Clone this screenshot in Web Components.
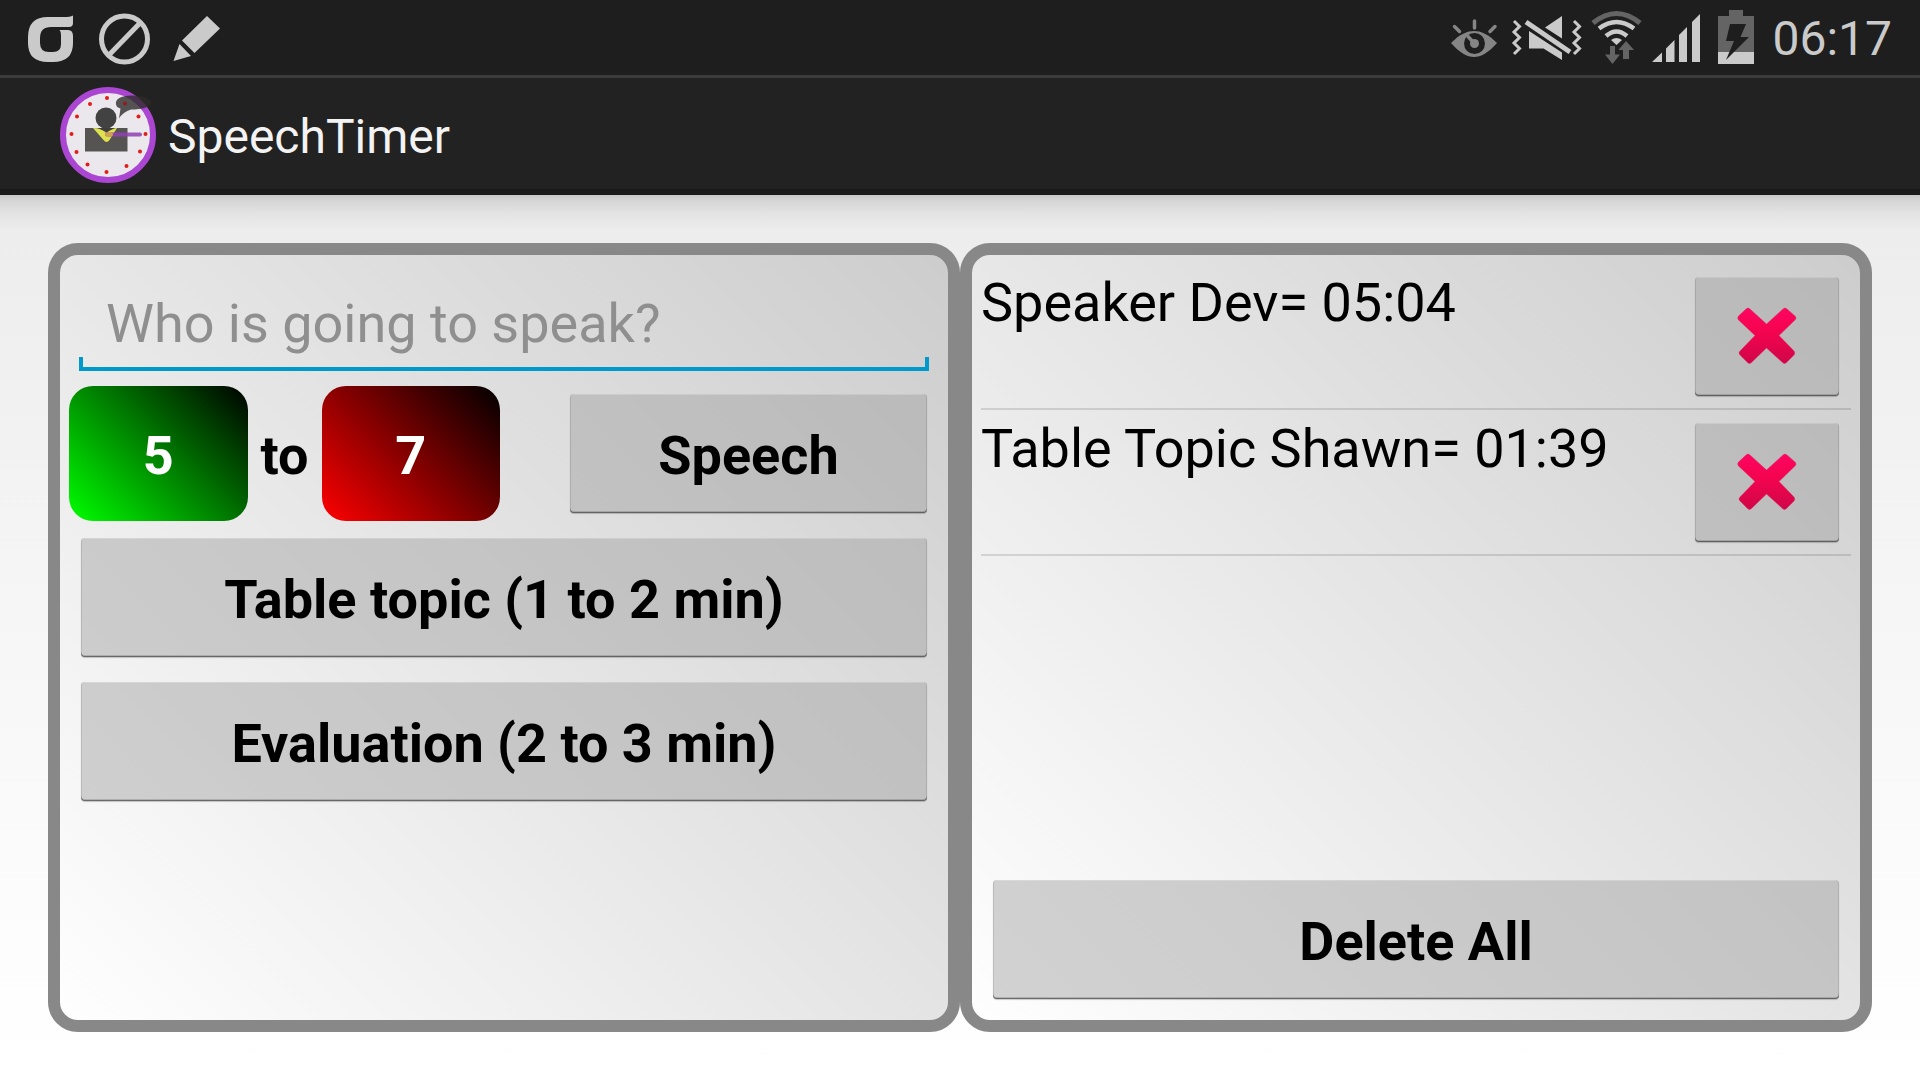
<!DOCTYPE html>
<html lang="en">
<head>
<meta charset="utf-8">
<meta name="viewport" content="width=device-width, initial-scale=1">
<title>SpeechTimer</title>
<style>
  html, body { margin: 0; }
  body { font-family: Roboto, "Liberation Sans", sans-serif; color: #000; background: #fff; }
</style>
</head>
<body>
<speech-app></speech-app>

<template id="t-app">
  <style>
    :host { display: flex; flex-direction: column; min-height: 100vh; }
    main {
      flex: 1; display: flex; padding: 48px; box-sizing: border-box;
      background:
        linear-gradient(rgba(0,0,0,.17), rgba(0,0,0,.1) 5px, rgba(0,0,0,.04) 18px, transparent 36px),
        linear-gradient(#ececec, #f5f5f5 42%, #fdfdfd 85%, #fff);
    }
    app-panel { flex: 1 1 0; }
    .range { display: grid; grid-template-columns: 1fr 74px 1fr 70px 2fr; align-items: center; padding-right: 12px; margin: 15px 0 17px; }
    .range span { text-align: center; font-size: 54px; line-height: 64px; font-weight: 700; padding-top: 4px; }
    .range holo-button { grid-column: 5; }
    .stack { display: flex; flex-direction: column; gap: 25px; margin: 0 12px; }
    .list { flex: 1; list-style: none; margin: 0; padding: 0; }
    .foot { margin: 0 12px 12px; }
  </style>
  <status-bar></status-bar>
  <title-bar>SpeechTimer</title-bar>
  <main>
    <app-panel>
      <speaker-field></speaker-field>
      <div class="range">
        <minute-button tone="green">5</minute-button>
        <span>to</span>
        <minute-button tone="red">7</minute-button>
        <holo-button>Speech</holo-button>
      </div>
      <div class="stack">
        <holo-button>Table topic (1 to 2 min)</holo-button>
        <holo-button>Evaluation (2 to 3 min)</holo-button>
      </div>
    </app-panel>
    <app-panel>
      <div class="list" role="list">
        <record-row role="listitem">Speaker Dev= 05:04</record-row>
        <record-row role="listitem">Table Topic Shawn= 01:39</record-row>
      </div>
      <holo-button class="foot">Delete All</holo-button>
    </app-panel>
  </main>
</template>

<template id="t-status">
  <style>
    :host { display: flex; justify-content: space-between; height: 75px; padding: 0 28px 0 25px; background: #1e1e1e; border-bottom: 3px solid #3c3c3c; color: #cacaca; }
    .l, .r { display: flex; align-items: center; }
    .l { gap: 23px; }
    .r { gap: 9px; }
    svg { display: block; height: 75px; fill: #cacaca; }
    time { font-size: 48px; line-height: 56px; padding-top: 2px; }
  </style>
  <div class="l">
    <svg width="50" viewBox="25 0 50 75" aria-hidden="true"><path fill-rule="evenodd" d="M48 17H64Q70 17 73 15.500V23Q73 27 69 27H51Q40 27 40 38V43Q40 52 49 52H53Q61 52 61 44V35Q61 31.500 59.500 30H68Q73 30 73 36V43Q73 62 53 62H48Q28 62 28 43V37Q28 17 48 17Z"/></svg>
    <svg width="52" viewBox="98 0 52 75" aria-hidden="true"><g fill="none" stroke="#cacaca" stroke-width="5"><circle cx="124.500" cy="39" r="23"/><path d="M109 55L140 23"/></g></svg>
    <svg width="48" viewBox="173 0 48 75" aria-hidden="true"><path d="M207 16L220 28.500L194.500 53L182 40.500ZM179.500 44L191 56L173.500 61Z"/></svg>
  </div>
  <div class="r">
    <svg width="51" viewBox="1451 0 51 75" aria-hidden="true"><path fill="#858585" d="M1451 43C1460 34 1467 31 1474 31S1488 34 1497 43C1488 53 1481 57 1474 57S1460 53 1451 43Z"/><circle cx="1474.500" cy="43.500" r="10.500" fill="#1e1e1e"/><circle cx="1474.500" cy="43.500" r="4.500" fill="#858585"/><path d="M1474.500 43.500L1468 36.500M1474.500 21V28M1454.500 26.500L1459.500 31.500M1495 26.500L1490 31.500" stroke="#858585" stroke-width="3.500" stroke-linecap="round"/></svg>
    <svg width="71" viewBox="1511 0 71 75" aria-hidden="true"><path d="M1562 16V38.500L1545 27.500ZM1529 31L1562 52.500V60L1543.500 48.500H1529Z"/><path d="M1526 22L1570 52" stroke="#cacaca" stroke-width="5"/><path d="M1514 21L1519.500 26.500L1514 32L1519.500 37.500L1514 43L1519.500 48.500L1514 54M1574 21L1579.500 26.500L1574 32L1579.500 37.500L1574 43L1579.500 48.500L1574 54" fill="none" stroke="#cacaca" stroke-width="3"/></svg>
    <svg width="51" viewBox="1591 0 51 75" aria-hidden="true"><g fill="none"><path d="M1593 23Q1616.500 4 1640 23" stroke="#646464" stroke-width="5"/><path d="M1599 28.500Q1616.500 15.500 1634 28.500M1606 36Q1616.500 27 1627 36" stroke="#cacaca" stroke-width="4.500"/></g><path d="M1611 40Q1616.500 36 1622 40L1616.500 45Z"/><path fill="#646464" d="M1610 46H1615V54.500H1620L1612.500 64L1605 54.500H1610ZM1626 41L1634 50H1629V59H1623V50H1618.500Z"/></svg>
    <svg width="56" viewBox="1651 0 56 75" aria-hidden="true"><path d="M1652 62L1662 52.500V62ZM1666 62V48.500L1674.500 40V62ZM1679 62V35L1687 27V62ZM1692 62V22L1700 14V62Z"/></svg>
    <svg width="47" viewBox="1716 0 47 75" aria-hidden="true"><path fill="#646464" d="M1729 10H1743V16H1754V64H1718V16H1729Z"/><path d="M1718 52H1754V64H1718Z"/><path fill="#1e1e1e" d="M1730 24H1746L1740.500 37H1749L1726 60L1734 41H1726Z"/></svg>
    <time>06:17</time>
  </div>
</template>

<template id="t-title">
  <style>
    :host { display: block; }
    header { display: flex; align-items: center; gap: 12px; height: 117px; padding: 0 60px; background: linear-gradient(#222 111px, #191919 111px); color: #f3f3f3; }
    h1 { margin: 0; font-size: 48px; line-height: 56px; font-weight: 400; }
    svg { display: block; }
  </style>
  <header>
    <svg width="96" height="99" viewBox="60 87 96 99" aria-hidden="true">
      <circle cx="108" cy="135" r="45" fill="#ebe8ed" stroke="#aa46d2" stroke-width="6"/>
      <g fill="#e31b1b"><circle cx="107" cy="98" r="2"/><circle cx="90" cy="104" r="2"/><circle cx="77" cy="116.500" r="2"/><circle cx="71.500" cy="134" r="2"/><circle cx="76.500" cy="152" r="2"/><circle cx="87.500" cy="164.500" r="2"/><circle cx="106.500" cy="172" r="2"/><circle cx="126.500" cy="166" r="2"/><circle cx="140" cy="151.500" r="2"/><circle cx="145.500" cy="134" r="2"/><circle cx="138.500" cy="116.500" r="2"/></g>
      <path fill="#565452" d="M85 128H127.500V151.500H85Z"/>
      <path fill="#dfe04e" d="M93 128Q101 128 106.500 133Q112 128 117 128L109.500 140Q106.500 144 103.500 140Z"/>
      <path fill="#3f3d3d" d="M98 128H115L106.500 132Z"/>
      <circle cx="106" cy="118" r="10.500" fill="#434242"/>
      <path d="M107 134.500H140" stroke="#8f3fb0" stroke-opacity=".85" stroke-width="4" stroke-linecap="round"/>
      <path d="M107 134.500H111" stroke="#cfa050" stroke-width="4" stroke-linecap="round"/>
      <path fill="#2e2c2a" fill-opacity=".8" d="M116 104C115 99 121 96 131 95.500C142 95 151 99 151 102.500C151 107 142 109.500 131 109.500Q123 112 119 118.500L120.500 108.500Q116 107 116 104Z"/>
      <circle cx="125" cy="103.500" r="2" fill="#8a1f1c"/>
    </svg>
    <h1><slot></slot></h1>
  </header>
</template>

<template id="t-panel">
  <style>
    :host {
      display: flex; flex-direction: column; box-sizing: border-box; min-width: 0; padding: 9px;
      border: 12px solid #888; border-radius: 30px;
      background: linear-gradient(45deg, #fff, #ccc) border-box;
    }
  </style>
  <slot></slot>
</template>

<template id="t-field">
  <style>
    :host { display: block; margin: 0 10px; }
    input {
      display: block; box-sizing: border-box; width: 100%; height: 107px; padding: 12px 24px 0 27px;
      border: 0; outline: 0; font: 400 54px/64px Roboto, "Liberation Sans", sans-serif; color: #000;
      background:
        linear-gradient(#0099cc, #0099cc) left bottom / 100% 4px no-repeat,
        linear-gradient(#0099cc, #0099cc) left bottom / 4px 14px no-repeat,
        linear-gradient(#0099cc, #0099cc) right bottom / 4px 14px no-repeat;
    }
    input::placeholder { color: #8f8f8f; opacity: 1; }
  </style>
  <input type="text" aria-label="Speaker name" placeholder="Who is going to speak?">
</template>

<template id="t-minute">
  <style>
    :host { display: block; --c: #0f0; }
    :host([tone="red"]) { --c: #f00; }
    button {
      display: block; width: 100%; height: 135px; padding: 4px 0 0; border: 0; border-radius: 24px;
      background: linear-gradient(45deg, var(--c), #000); color: #fff;
      font: 700 54px/64px Roboto, "Liberation Sans", sans-serif;
    }
  </style>
  <button type="button"><slot></slot></button>
</template>

<template id="t-holo">
  <style>
    :host { display: block; }
    button {
      display: flex; align-items: center; justify-content: center; box-sizing: border-box;
      width: 100%; height: 119px; padding: 4px 0 0; border: 0; border-radius: 4px; color: #000;
      background: rgba(161,161,161,.465);
      box-shadow: inset 0 -1px 0 rgba(0,0,0,.4), inset 0 -2px 0 rgba(0,0,0,.15), inset 1px 0 0 rgba(0,0,0,.1), inset -1px 0 0 rgba(0,0,0,.1), inset 0 1px 0 rgba(255,255,255,.2), 0 1px 1px rgba(0,0,0,.2);
      font: 700 54px/64px Roboto, "Liberation Sans", sans-serif;
    }
    :host([label]) button { padding: 0; }
  </style>
  <button type="button"><slot></slot></button>
</template>

<template id="t-row">
  <style>
    :host { display: flex; justify-content: space-between; align-items: flex-start; padding: 0 12px 0 0; height: 144px; border-bottom: 2px solid rgba(0,0,0,.12); }
    p { margin: 0; padding-top: 7px; font-size: 54px; line-height: 64px; }
    holo-button { width: 144px; margin-top: 13px; flex: none; }
    svg { display: block; }
  </style>
  <p><slot></slot></p>
  <holo-button label="Delete">
    <svg width="60" height="60" viewBox="0 0 60 60" aria-hidden="true">
      <defs><linearGradient id="g" x1="0" y1="0" x2="0" y2="1"><stop offset="0" stop-color="#ff0560"/><stop offset=".45" stop-color="#f3044f"/><stop offset="1" stop-color="#cf0648"/></linearGradient></defs>
      <path fill="url(#g)" stroke="#e0245e" stroke-opacity=".4" d="M9 2Q11 0 13 2L29.500 17L46 2Q48 0 50 2L58 9Q60 11 58 13L42 28.500L57 44Q58.500 46 57 48L50 55Q47.500 58 45 55L29.500 41L15 55Q12.500 58 10 55L3 48Q1 46 3 44L18 28.500L1.500 13Q0 11 1.500 9Z"/>
    </svg>
  </holo-button>
</template>

<script>
  const define = (name, templateId, setup) =>
    customElements.define(name, class extends HTMLElement {
      constructor() {
        super();
        const root = this.attachShadow({ mode: 'open' });
        root.append(document.getElementById(templateId).content.cloneNode(true));
      }
      connectedCallback() {
        if (setup) setup(this);
      }
    });

  define('app-panel', 't-panel');
  define('speaker-field', 't-field');
  define('minute-button', 't-minute');
  define('holo-button', 't-holo', host => {
    const label = host.getAttribute('label');
    if (label) host.shadowRoot.querySelector('button').setAttribute('aria-label', label);
  });
  define('record-row', 't-row');
  define('status-bar', 't-status');
  define('title-bar', 't-title');
  define('speech-app', 't-app');
</script>
</body>
</html>
